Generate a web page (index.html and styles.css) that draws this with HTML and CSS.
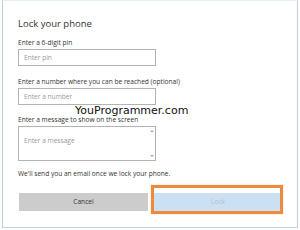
FILE: index.html
```html
<!DOCTYPE html>
<html>
<head>
<meta charset="utf-8">
<link rel="stylesheet" href="styles.css">
</head>
<body>
<div class="frame">
  <h1 class="title">Lock your phone</h1>
  <div class="label l1">Enter a 6-digit pin</div>
  <div class="field f1">Enter pin</div>
  <div class="label l2">Enter a number where you can be reached (optional)</div>
  <div class="field f2">Enter a number</div>
  <div class="label l3">Enter a message to show on the screen</div>
  <div class="field area">Enter a message<span class="arr up"></span><span class="arr down"></span></div>
  <div class="label note">We'll send you an email once we lock your phone.</div>
  <div class="buttons">
    <div class="btn cancel">Cancel</div>
    <div class="btn lock">Lock<span class="highlight"></span></div>
  </div>
  <div class="watermark">YouProgrammer.com</div>
</div>
</body>
</html>
```
FILE: styles.css
```css
html, body {
  margin: 0;
  padding: 0;
  background: #ffffff;
}
.frame {
  position: relative;
  box-sizing: border-box;
  margin-left: 2px;
  width: 296px;
  height: 228px;
  border: 1px solid #bcd4da;
  border-top-color: #e6eff2;
  padding: 17px 0 0 15px;
  font-family: "Open Sans", "Noto Sans", sans-serif;
  color: #333333;
}
.title {
  margin: 0;
  font-size: 9.5px;
  font-weight: 400;
  line-height: 12px;
  color: #333333;
}
.label {
  font-size: 6.6px;
  line-height: 9px;
  color: #333333;
}
.l1 { margin-top: 8px; }
.l2 { margin-top: 11px; }
.l3 { margin-top: 10px; }
.note { margin-top: 8px; }
.field {
  position: relative;
  box-sizing: border-box;
  width: 138px;
  height: 17px;
  margin-top: 2px;
  border: 1px solid #b3b3b3;
  padding: 0 0 0 5px;
  font-size: 6.6px;
  line-height: 15px;
  color: #9a9a9a;
}
.area {
  height: 35px;
  padding-top: 9px;
  line-height: 9px;
}
.arr {
  position: absolute;
  right: 1px;
  width: 0;
  height: 0;
  border-left: 2px solid transparent;
  border-right: 2px solid transparent;
}
.arr.up { top: 3px; border-bottom: 2px solid #a8a8a8; }
.arr.down { bottom: 3px; border-top: 2px solid #a8a8a8; }
.buttons {
  display: flex;
  gap: 6px;
  margin-top: 15px;
  margin-left: 1px;
}
.btn {
  box-sizing: border-box;
  height: 18px;
  line-height: 18px;
  text-align: center;
  font-size: 6.6px;
}
.cancel {
  width: 129px;
  background: #cccccc;
  color: #333333;
}
.lock {
  position: relative;
  width: 128px;
  background: #cce0f3;
  color: #b0bfcd;
}
.highlight {
  position: absolute;
  left: -3px;
  top: -8px;
  width: 132px;
  height: 29px;
  box-sizing: border-box;
  border: 3px solid #ef8a3d;
  box-shadow: 0 0 1px #f6c59c;
}
.watermark {
  position: absolute;
  left: 72px;
  top: 102px;
  font-family: "DejaVu Sans", sans-serif;
  font-size: 11px;
  line-height: 15px;
  color: #111111;
}
```
